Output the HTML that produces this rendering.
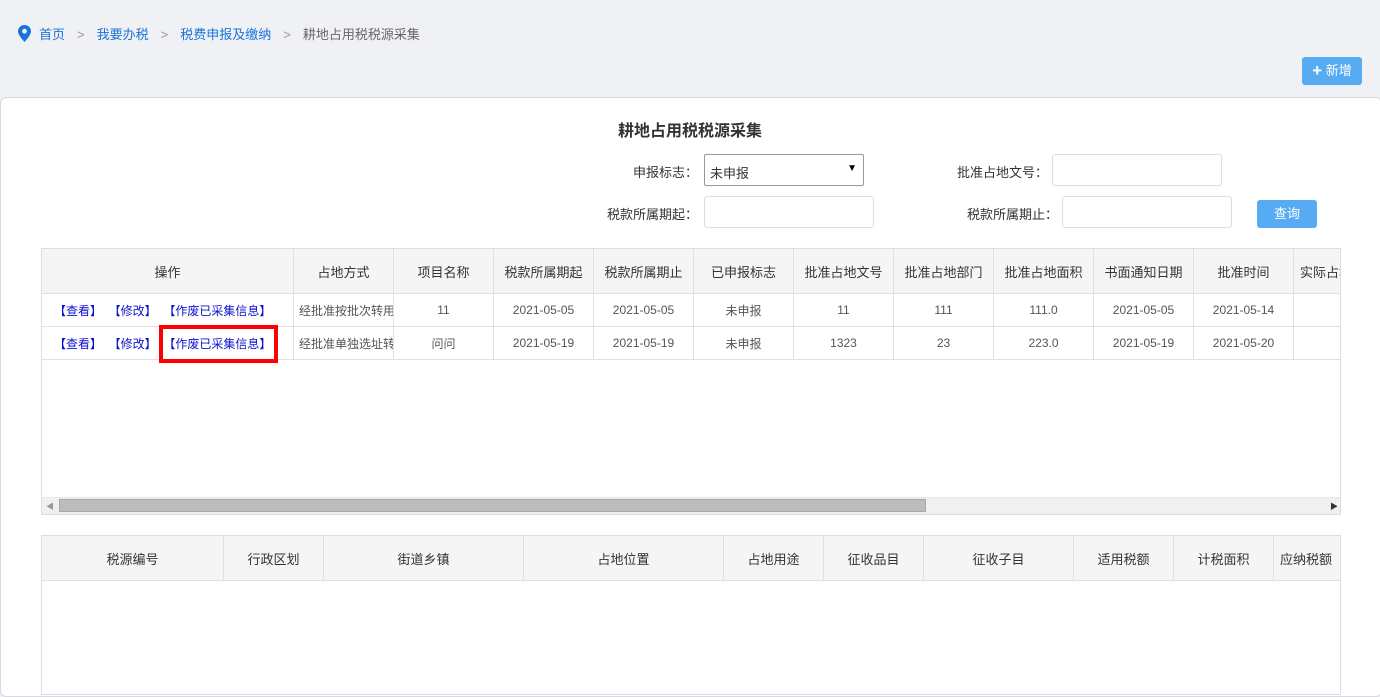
<!DOCTYPE html>
<html><head><meta charset="utf-8"><style>
*{box-sizing:border-box;margin:0;padding:0}
body{width:1380px;height:684px;overflow:hidden;background:#f0f1f5;font-family:"Liberation Sans","Noto Sans CJK SC",sans-serif;font-size:13px;color:#333;position:relative}
.a{position:absolute}
.bc{top:24px;left:18px;font-size:13px;color:#666;white-space:nowrap}
.bc a{color:#1a73d9;text-decoration:none}
.bc .s{color:#999;margin:0 12px}
.panel{top:97px;left:0;width:1382px;height:600px;background:#fff;border:1px solid #d9d9de;border-radius:6px}
.btn{background:#56abf2;color:#fff;border-radius:3px;text-align:center}
.inp{border:1px solid #ddd;border-radius:3px;background:#fff}
.lbl{font-size:13px;color:#333;text-align:right}
table{border-collapse:collapse;table-layout:fixed;position:absolute}
td,th{border:1px solid #e0e0e0;text-align:center;overflow:hidden;white-space:nowrap;font-weight:normal;font-size:13px}
th{background:#f5f5f5;height:45px;color:#333}
td{height:33px;color:#555;font-size:12px}
.op{color:#1010d0;font-size:12px}
.box{border:1px solid #ddd}
</style></head><body>
<div class="a bc"><svg width="13" height="17" viewBox="0 0 13 17" style="vertical-align:-3px;margin-right:8px"><path d="M6.5 0C2.9 0 0 2.8 0 6.3 0 10.5 6.5 17 6.5 17S13 10.5 13 6.3C13 2.8 10.1 0 6.5 0z" fill="#1a73d9"/><circle cx="6.5" cy="6.2" r="2.4" fill="#f0f1f5"/></svg><a>首页</a><span class="s">&gt;</span><a>我要办税</a><span class="s">&gt;</span><a>税费申报及缴纳</a><span class="s">&gt;</span><span>耕地占用税税源采集</span></div>
<div class="a btn" style="left:1302px;top:57px;width:60px;height:28px;line-height:28px;font-size:13px"><span style="font-size:17px;font-weight:bold;vertical-align:-1px">+</span> 新增</div>
<div class="a panel"></div>
<div class="a" style="left:618px;top:117px;font-size:16px;font-weight:bold;color:#333">耕地占用税税源采集</div>
<div class="a lbl" style="left:590px;top:162px;width:108px">申报标志：</div>
<div class="a" style="left:704px;top:154px;width:160px;height:32px;border:1px solid #999;border-radius:2px;background:#fff;padding:8px 5px;font-size:13px">未申报<span style="position:absolute;right:6px;top:8px;font-size:10px;color:#000">▼</span></div>
<div class="a lbl" style="left:910px;top:162px;width:138px">批准占地文号：</div>
<div class="a inp" style="left:1052px;top:154px;width:170px;height:32px"></div>
<div class="a lbl" style="left:560px;top:204px;width:138px">税款所属期起：</div>
<div class="a inp" style="left:704px;top:196px;width:170px;height:32px"></div>
<div class="a lbl" style="left:920px;top:204px;width:138px">税款所属期止：</div>
<div class="a inp" style="left:1062px;top:196px;width:170px;height:32px"></div>
<div class="a btn" style="left:1257px;top:200px;width:60px;height:28px;line-height:28px">查询</div>

<div class="a box" style="left:41px;top:248px;width:1300px;height:267px;overflow:hidden">
<table style="left:-1px;top:-1px;width:1352px">
<colgroup><col style="width:252px"><col style="width:100px"><col style="width:100px"><col style="width:100px"><col style="width:100px"><col style="width:100px"><col style="width:100px"><col style="width:100px"><col style="width:100px"><col style="width:100px"><col style="width:100px"><col style="width:100px"></colgroup>
<tr><th>操作</th><th>占地方式</th><th>项目名称</th><th>税款所属期起</th><th>税款所属期止</th><th>已申报标志</th><th>批准占地文号</th><th>批准占地部门</th><th>批准占地面积</th><th>书面通知日期</th><th>批准时间</th><th style="text-align:left;padding-left:6px">实际占地</th></tr>
<tr><td class="op" style="text-align:left;padding-left:12px">【查看】 &nbsp;【修改】 &nbsp;【作废已采集信息】</td><td style="text-align:left;padding-left:5px">经批准按批次转用</td><td>11</td><td>2021-05-05</td><td>2021-05-05</td><td>未申报</td><td>11</td><td>111</td><td>111.0</td><td>2021-05-05</td><td>2021-05-14</td><td></td></tr>
<tr><td class="op" style="text-align:left;padding-left:12px">【查看】 &nbsp;【修改】 &nbsp;【作废已采集信息】</td><td style="text-align:left;padding-left:5px">经批准单独选址转</td><td>问问</td><td>2021-05-19</td><td>2021-05-19</td><td>未申报</td><td>1323</td><td>23</td><td>223.0</td><td>2021-05-19</td><td>2021-05-20</td><td></td></tr>
</table>
<div class="a" style="left:0;top:248px;width:1300px;height:17px;background:#f0f0f0;border-top:1px solid #e6e6e6"></div>
<div class="a" style="left:4px;top:252px;font-size:8px;color:#999">◀</div>
<div class="a" style="left:1288px;top:252px;font-size:8px;color:#333">▶</div>
<div class="a" style="left:17px;top:250px;width:867px;height:13px;background:#bcbcbc;border:1px solid #a8a8a8"></div>
</div>
<div class="a" style="left:159px;top:325px;width:119px;height:38px;border:4px solid #f00"></div>

<div class="a box" style="left:41px;top:535px;width:1300px;height:160px;overflow:hidden">
<table style="left:-1px;top:-1px;width:1352px">
<colgroup><col style="width:182px"><col style="width:100px"><col style="width:200px"><col style="width:200px"><col style="width:100px"><col style="width:100px"><col style="width:150px"><col style="width:100px"><col style="width:100px"><col style="width:120px"></colgroup>
<tr><th>税源编号</th><th>行政区划</th><th>街道乡镇</th><th>占地位置</th><th>占地用途</th><th>征收品目</th><th>征收子目</th><th>适用税额</th><th>计税面积</th><th style="text-align:left;padding-left:6px">应纳税额</th></tr>
</table>
</div>
</body></html>
